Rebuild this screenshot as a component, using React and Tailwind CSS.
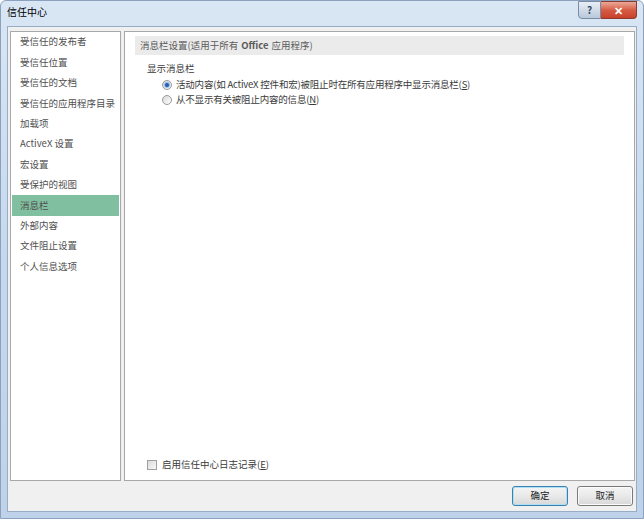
import React from "react";

const font = { fontFamily: '"Noto Sans CJK SC", "Noto Sans", sans-serif' };

const items = [
  "受信任的发布者",
  "受信任位置",
  "受信任的文档",
  "受信任的应用程序目录",
  "加载项",
  "ActiveX 设置",
  "宏设置",
  "受保护的视图",
  "消息栏",
  "外部内容",
  "文件阻止设置",
  "个人信息选项",
];

function Radio({ checked }) {
  return (
    <span className="w-[10px] h-[10px] rounded-full border border-[#9a9a9a] bg-gradient-to-br from-[#d8d8d8] to-[#ffffff] flex items-center justify-center shrink-0">
      {checked && <span className="w-[4px] h-[4px] rounded-full bg-[#2a5db0] shadow-[0_0_1px_1px_#8fb6ea]"></span>}
    </span>
  );
}

export default function App() {
  return (
    <div
      className="w-[644px] h-[519px] flex flex-col rounded-t-[6px] border border-[#8aa2bd] bg-gradient-to-b from-[#d9e6f4] via-[#c6d8ed] to-[#bed2e9] overflow-hidden whitespace-nowrap"
      style={font}
    >
      {/* title bar */}
      <div className="h-[25px] flex items-start justify-between shrink-0">
        <div className="pl-[6px] pt-[5px] text-[10px] leading-[12px] text-black">信任中心</div>
        <div className="flex mr-[6px]">
          <div className="w-[23px] h-[18px] border border-[#7a8ca4] rounded-bl-[4px] bg-gradient-to-b from-[#e8eef6] to-[#b9c8db] flex items-center justify-center text-[10px] leading-none text-[#3c4a5e] font-bold">?</div>
          <div className="w-[36px] h-[18px] border border-l-0 border-[#8a3a2e] rounded-br-[4px] bg-gradient-to-b from-[#e9a899] via-[#d65c45] to-[#c8412a] flex items-center justify-center text-[11px] leading-none text-white font-bold">✕</div>
        </div>
      </div>

      {/* client area */}
      <div className="flex-1 mx-[6px] mb-[6px] bg-[#f0f0f0] border border-[#97adc6] flex flex-col">
        <div className="flex pt-[4px] pl-[2px] pr-[1px] gap-[3px] shrink-0">
          {/* left list */}
          <div className="w-[111px] h-[450px] bg-white border border-[#a8a8a8] px-[1px]">
            {items.map((t, i) => (
              <div
                key={t}
                className={
                  "h-[20.4px] flex items-center pl-[8px] text-[9.5px] leading-none text-[#505050] " +
                  (i === 8 ? "bg-[#80bf9f] text-[#3e3e3e]" : "")
                }
              >
                {t}
              </div>
            ))}
          </div>

          {/* right panel */}
          <div className="flex-1 h-[450px] bg-white border border-[#a8a8a8] flex flex-col pt-[4px] px-[10px] pb-[10px]">
            <div className="h-[19px] bg-[#ebebeb] flex items-center pl-[5px] text-[9.5px] leading-none text-[#5a5a5a]">
              消息栏设置(适用于所有<span className="font-bold mx-[3px]">Office</span>应用程序)
            </div>
            <div className="pl-[12px] pt-[9px] text-[9.5px] leading-none text-[#3a3a3a]">显示消息栏</div>
            <div className="pl-[27px] pt-[5px] flex items-center gap-[4px] h-[17px] text-[9.5px] leading-none text-[#3a3a3a]">
              <Radio checked />
              <span className="tracking-[-0.2px]">活动内容(如 ActiveX 控件和宏)被阻止时在所有应用程序中显示消息栏(<span className="underline">S</span>)</span>
            </div>
            <div className="pl-[27px] pt-[1px] flex items-center gap-[4px] h-[17px] text-[9.5px] leading-none text-[#3a3a3a]">
              <Radio />
              <span className="tracking-[-0.2px]">从不显示有关被阻止内容的信息(<span className="underline">N</span>)</span>
            </div>
            <div className="flex-1"></div>
            <div className="pl-[12px] flex items-center gap-[5px] text-[9.5px] leading-none text-[#3a3a3a]">
              <span className="w-[10px] h-[10px] border border-[#a0a0a0] bg-gradient-to-br from-[#dcdcdc] to-[#f8f8f8] shrink-0"></span>
              <span>启用信任中心日志记录(<span className="underline">E</span>)</span>
            </div>
          </div>
        </div>

        {/* buttons */}
        <div className="flex-1 flex items-center justify-end gap-[9px] pr-[3px]">
          <button className="w-[56px] h-[20px] rounded-[3px] border border-[#3c7fb1] shadow-[inset_0_0_0_1px_#aee0f5] bg-gradient-to-b from-[#f4f4f4] via-[#e9e9e9] to-[#d8d8d8] text-[9.5px] leading-none text-[#222]">确定</button>
          <button className="w-[56px] h-[20px] rounded-[3px] border border-[#7a7a7a] shadow-[inset_0_0_0_1px_#fbfbfb] bg-gradient-to-b from-[#f4f4f4] via-[#e9e9e9] to-[#d8d8d8] text-[9.5px] leading-none text-[#222]">取消</button>
        </div>
      </div>
    </div>
  );
}
